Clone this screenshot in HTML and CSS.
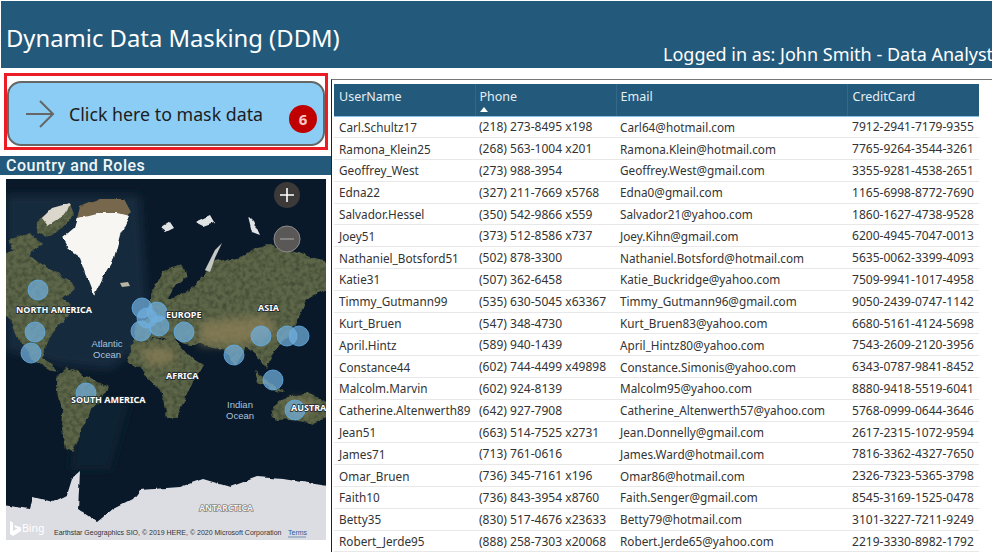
FILE: index.html
```html
<!DOCTYPE html>
<html lang="en">

<head>
    <meta charset="UTF-8">
    <title>Dynamic Data Masking (DDM)</title>
    <link rel="stylesheet" href="styles.css">
</head>

<body>
    <header class="top-bar">
        <h1 class="title">Dynamic Data Masking (DDM)</h1>
        <span class="logged-in">Logged in as: John Smith - Data Analyst</span>
    </header>

    <main class="content">
        <section class="left-col">
            <div class="highlight">
                <button class="mask-btn">
                    <svg class="arrow" viewBox="0 0 30 30" width="30" height="30">
                        <path d="M1 15H28M15 2L28 15L15 28" fill="none" stroke="#666" stroke-width="2"></path>
                    </svg>
                    <span>Click here to mask data</span>
                    <span class="badge">6</span>
                </button>
            </div>
            <h2 class="section-title">Country and Roles</h2>
            <div class="map">
                <svg class="map-svg" viewBox="6 179 320 361" width="320" height="361">
                    <defs>
                        <filter id="land" filterUnits="userSpaceOnUse" x="-10" y="170" width="350" height="380" color-interpolation-filters="sRGB">
                            <feTurbulence type="fractalNoise" baseFrequency="0.08" numOctaves="4" seed="3" result="n"></feTurbulence>
                            <feDisplacementMap in="SourceGraphic" in2="n" scale="8" xChannelSelector="R" yChannelSelector="G" result="d"></feDisplacementMap>
                            <feGaussianBlur in="d" stdDeviation="0.6" result="b"></feGaussianBlur>
                            <feTurbulence type="fractalNoise" baseFrequency="0.22" numOctaves="2" seed="8" result="t"></feTurbulence>
                            <feColorMatrix in="t" type="matrix" values="0 0 0 0 0.22  0 0 0 0 0.26  0 0 0 0 0.18  1.6 0 0 0 -0.6" result="spots"></feColorMatrix>
                            <feComposite in="spots" in2="b" operator="atop" result="c"></feComposite>
                            <feGaussianBlur in="c" stdDeviation="0.4"></feGaussianBlur>
                        </filter>
                        <filter id="ice" filterUnits="userSpaceOnUse" x="-10" y="170" width="350" height="380" color-interpolation-filters="sRGB">
                            <feTurbulence type="fractalNoise" baseFrequency="0.1" numOctaves="3" seed="5" result="n"></feTurbulence>
                            <feDisplacementMap in="SourceGraphic" in2="n" scale="4" xChannelSelector="R" yChannelSelector="G" result="d"></feDisplacementMap>
                            <feGaussianBlur in="d" stdDeviation="0.7"></feGaussianBlur>
                        </filter>
                        <filter id="blur" filterUnits="userSpaceOnUse" x="-10" y="170" width="350" height="380">
                            <feGaussianBlur stdDeviation="5"></feGaussianBlur>
                        </filter>
                    </defs>
                    <rect x="6" y="179" width="320" height="361" fill="#0a1929"></rect>
                    <path d="M6 195L140 195L150 340L110 370L60 365L6 350Z" fill="#12293d" filter="url(#blur)"></path>
                    <path d="M80 400L130 400L110 470L70 470Z" fill="#0f2333" filter="url(#blur)"></path>
                    <!-- land -->
                    <g fill="#5d6648" filter="url(#land)">
                        <path d="M-5 253L20 250L33 258L50 272L70 278L75 288L63 298L72 308L55 330L47 342L42 358L52 364L58 372L50 370L36 362L22 345L14 325L-5 310Z"></path>
                        <path d="M8 240L30 232L42 245L28 254L12 250ZM37 222L50 212L70 204L74 214L62 228L45 238L36 232Z"></path>
                        <path d="M55 379L67 367L83 375L107 387L97 405L83 425L72 454L65 450L62 429L63 412L55 392Z"></path>
                        <path d="M150 295L163 272L183 265L187 275L173 288L170 300L195 285L213 262L233 258L267 245L300 252L335 265L335 288L307 298L300 315L290 335L277 348L265 368L255 352L245 348L235 367L225 350L205 345L190 345L165 337L150 340L132 342L135 322L150 318Z"></path>
                        <path d="M127 362L133 342L173 338L187 355L203 365L193 382L177 418L167 418L160 389L140 370Z"></path>
                        <path d="M272 409L290 395L307 394L335 405L335 415L313 425L293 419L275 420Z"></path>
                        <path d="M255 372L268 382L285 392L270 388L258 382Z"></path>
                    </g>
                    <g fill="#8d8059" filter="url(#blur)" opacity="0.75">
                        <path d="M200 322L268 315L276 335L240 345L200 345Z"></path>
                        <path d="M138 348L172 348L176 362L150 366Z"></path>
                        <path d="M288 400L312 400L314 412L292 414Z"></path>
                    </g>
                    <path d="M42 218L52 208L70 203L66 214L48 226Z" fill="#dcd7cc" filter="url(#ice)"></path>
                    <path d="M80 207L100 199L124 199L131 212L120 222L76 222Z" fill="#77674d" filter="url(#ice)"></path>
                    <path d="M62 238L74 228L77 218L97 213L117 213L129 216L120 235L114 258L104 275L94 296L87 278L80 258L69 250Z" fill="#f8f6f3" filter="url(#ice)"></path>
                    <path d="M161 228L170 222L174 228L166 232ZM195 222L210 215L214 222L203 226ZM248 216L254 222L260 235L252 232Z" fill="#dfe3e4" filter="url(#ice)"></path>
                    <path d="M205 270L215 250L222 243L215 258L210 272Z" fill="#c4c7c2"></path>
                    <path d="M120 283L128 282L130 286L122 287Z" fill="#b8b5a4"></path>
                    <path d="M-5 504L30 509L33 497L53 502L67 495L72 479L80 472L78 509L97 522L113 509L133 499L140 490L180 487L203 479L230 487L257 477L283 479L335 487L335 550L-5 550Z" fill="#dcdde3" filter="url(#ice)"></path>
                    <!-- bubbles -->
                    <g fill="#72aedd" fill-opacity="0.72" stroke="#62b0ec" stroke-width="0.8">
                        <circle cx="38" cy="290" r="10"></circle>
                        <circle cx="35" cy="332" r="10"></circle>
                        <circle cx="31" cy="353" r="10"></circle>
                        <circle cx="142" cy="308" r="10"></circle>
                        <circle cx="157" cy="312" r="10"></circle>
                        <circle cx="147" cy="318" r="10"></circle>
                        <circle cx="141" cy="331" r="10"></circle>
                        <circle cx="159" cy="326" r="10"></circle>
                        <circle cx="184" cy="332" r="10"></circle>
                        <circle cx="261" cy="336" r="10"></circle>
                        <circle cx="287" cy="336" r="10"></circle>
                        <circle cx="299" cy="336" r="10"></circle>
                        <circle cx="234" cy="355" r="10"></circle>
                        <circle cx="273" cy="380" r="10"></circle>
                        <circle cx="86" cy="393" r="10"></circle>
                        <circle cx="295" cy="410" r="10"></circle>
                    </g>
                    <!-- labels -->
                    <g class="map-label">
                        <text x="16" y="313">NORTH AMERICA</text>
                        <text x="166" y="318">EUROPE</text>
                        <text x="258" y="311">ASIA</text>
                        <text x="166" y="379">AFRICA</text>
                        <text x="71" y="403">SOUTH AMERICA</text>
                        <text x="291" y="411">AUSTRA</text>
                    </g>
                    <g class="map-ocean">
                        <text x="107" y="347">Atlantic</text>
                        <text x="107" y="358">Ocean</text>
                        <text x="240" y="408">Indian</text>
                        <text x="240" y="419">Ocean</text>
                    </g>
                    <text class="map-ice" x="226" y="511">ANTARCTICA</text>
                    <!-- zoom buttons -->
                    <circle cx="287" cy="195" r="13" fill="#3b3a39"></circle>
                    <path d="M280 195H294M287 188V202" stroke="#fff" stroke-width="1.6"></path>
                    <circle cx="287" cy="239" r="13" fill="#5a5857" stroke="#8b8a89"></circle>
                    <path d="M280 239H294" stroke="#8f8e8d" stroke-width="1.6"></path>
                    <!-- bing -->
                    <path d="M10 521L13 522.5V531L17.5 528.5L15 527.5L14 525L21 527.5V531L13 536L10 534Z" fill="#fff"></path>
                    <text class="map-bing" x="22" y="532">Bing</text>
                    <text class="map-credit" x="54" y="535">Earthstar Geographics SIO, © 2019 HERE, © 2020 Microsoft Corporation</text>
                    <text class="map-terms" x="288" y="535">Terms</text>
                    <path d="M288 537H306" stroke="#2f5a96" stroke-width="0.6"></path>
                </svg>
            </div>
        </section>

        <section class="right-col">
            <table class="users">
                <thead>
                    <tr>
                        <th class="col-user">UserName</th>
                        <th class="col-phone">Phone<i class="sort"></i></th>
                        <th class="col-email">Email</th>
                        <th>CreditCard</th>
                    </tr>
                </thead>
                <tbody>
                    <tr><td>Carl.Schultz17</td><td>(218) 273-8495 x198</td><td>Carl64@hotmail.com</td><td>7912-2941-7179-9355</td></tr>
                    <tr><td>Ramona_Klein25</td><td>(268) 563-1004 x201</td><td>Ramona.Klein@hotmail.com</td><td>7765-9264-3544-3261</td></tr>
                    <tr><td>Geoffrey_West</td><td>(273) 988-3954</td><td>Geoffrey.West@gmail.com</td><td>3355-9281-4538-2651</td></tr>
                    <tr><td>Edna22</td><td>(327) 211-7669 x5768</td><td>Edna0@gmail.com</td><td>1165-6998-8772-7690</td></tr>
                    <tr><td>Salvador.Hessel</td><td>(350) 542-9866 x559</td><td>Salvador21@yahoo.com</td><td>1860-1627-4738-9528</td></tr>
                    <tr><td>Joey51</td><td>(373) 512-8586 x737</td><td>Joey.Kihn@gmail.com</td><td>6200-4945-7047-0013</td></tr>
                    <tr><td>Nathaniel_Botsford51</td><td>(502) 878-3300</td><td>Nathaniel.Botsford@hotmail.com</td><td>5635-0062-3399-4093</td></tr>
                    <tr><td>Katie31</td><td>(507) 362-6458</td><td>Katie_Buckridge@yahoo.com</td><td>7509-9941-1017-4958</td></tr>
                    <tr><td>Timmy_Gutmann99</td><td>(535) 630-5045 x63367</td><td>Timmy_Gutmann96@gmail.com</td><td>9050-2439-0747-1142</td></tr>
                    <tr><td>Kurt_Bruen</td><td>(547) 348-4730</td><td>Kurt_Bruen83@yahoo.com</td><td>6680-5161-4124-5698</td></tr>
                    <tr><td>April.Hintz</td><td>(589) 940-1439</td><td>April_Hintz80@yahoo.com</td><td>7543-2609-2120-3956</td></tr>
                    <tr><td>Constance44</td><td>(602) 744-4499 x49898</td><td>Constance.Simonis@yahoo.com</td><td>6343-0787-9841-8452</td></tr>
                    <tr><td>Malcolm.Marvin</td><td>(602) 924-8139</td><td>Malcolm95@yahoo.com</td><td>8880-9418-5519-6041</td></tr>
                    <tr><td>Catherine.Altenwerth89</td><td>(642) 927-7908</td><td>Catherine_Altenwerth57@yahoo.com</td><td>5768-0999-0644-3646</td></tr>
                    <tr><td>Jean51</td><td>(663) 514-7525 x2731</td><td>Jean.Donnelly@gmail.com</td><td>2617-2315-1072-9594</td></tr>
                    <tr><td>James71</td><td>(713) 761-0616</td><td>James.Ward@hotmail.com</td><td>7816-3362-4327-7650</td></tr>
                    <tr><td>Omar_Bruen</td><td>(736) 345-7161 x196</td><td>Omar86@hotmail.com</td><td>2326-7323-5365-3798</td></tr>
                    <tr><td>Faith10</td><td>(736) 843-3954 x8760</td><td>Faith.Senger@gmail.com</td><td>8545-3169-1525-0478</td></tr>
                    <tr><td>Betty35</td><td>(830) 517-4676 x23633</td><td>Betty79@hotmail.com</td><td>3101-3227-7211-9249</td></tr>
                    <tr><td>Robert_Jerde95</td><td>(888) 258-7303 x20068</td><td>Robert.Jerde65@yahoo.com</td><td>2219-3330-8982-1792</td></tr>
                </tbody>
            </table>
        </section>
    </main>
</body>

</html>
```

FILE: styles.css
```css
html,
body {
    margin: 0;
    padding: 0;
    height: 552px;
    overflow: hidden;
    background-color: #fff;
    font-family: 'Noto Sans', sans-serif;
}

/* Header */
.top-bar {
    margin: 1px 0 0 1px;
    height: 67px;
    box-sizing: border-box;
    padding: 0 0 2px 5px;
    background-color: #235a7b;
    color: #fff;
    display: flex;
    align-items: flex-end;
    justify-content: space-between;
    white-space: nowrap;
    overflow: hidden;
}

.title {
    margin: 0 0 12px 0;
    font-size: 23.8px;
    line-height: 32px;
    font-weight: 400;
}

.logged-in {
    flex: none;
    width: 329px;
    font-size: 18px;
    line-height: 24px;
}

.content {
    display: flex;
    height: 484px;
}

/* Left side */
.left-col {
    width: 331px;
    flex: none;
    box-sizing: border-box;
    padding: 5px 0 0 4px;
}

.highlight {
    width: 324px;
    height: 77px;
    box-sizing: border-box;
    border: 3px solid #ec1c24;
    padding: 5px 0 0 0;
}

.mask-btn {
    width: 318px;
    height: 65px;
    box-sizing: border-box;
    padding: 0 0 0 16px;
    margin: 0;
    background-color: #8ccdf6;
    border: 2px solid #666;
    border-radius: 14px;
    display: flex;
    align-items: center;
    gap: 14px;
    position: relative;
    font-family: 'Noto Sans', sans-serif;
    font-size: 17.8px;
    color: #1c1c1c;
}

.arrow {
    flex: none;
}

.badge {
    position: absolute;
    left: 280px;
    top: 22px;
    width: 28px;
    height: 28px;
    border-radius: 50%;
    background-color: #c00000;
    color: #f4c9c9;
    font-size: 15px;
    font-weight: bold;
    line-height: 28px;
    text-align: center;
}

.section-title {
    margin: 6px 0 0 -4px;
    width: 331px;
    height: 19px;
    box-sizing: border-box;
    padding-left: 6px;
    background-color: #235a7b;
    color: #f2f6f8;
    font-family: 'Roboto', sans-serif;
    font-size: 16px;
    line-height: 20px;
    font-weight: 500;
    letter-spacing: 0.5px;
}

.map {
    margin: 4px 0 0 2px;
    width: 320px;
    height: 361px;
}

.map-svg {
    display: block;
}

.map-label text {
    fill: #fff;
    stroke: #1a2530;
    stroke-width: 1.5px;
    paint-order: stroke;
    font-family: 'Noto Sans', sans-serif;
    font-size: 9px;
    font-weight: bold;
}

.map-ocean text {
    fill: #a9c4de;
    font-family: 'Liberation Sans', sans-serif;
    font-size: 9.5px;
    text-anchor: middle;
}

.map-ice {
    fill: #f4f4f4;
    stroke: #666;
    stroke-width: 1.2px;
    paint-order: stroke;
    font-family: 'Noto Sans', sans-serif;
    font-size: 8.5px;
    font-weight: bold;
    text-anchor: middle;
}

.map-bing {
    fill: #fff;
    font-family: 'Noto Sans', sans-serif;
    font-size: 10.5px;
}

.map-credit {
    fill: #333;
    font-family: 'Liberation Sans', sans-serif;
    font-size: 7px;
}

.map-terms {
    fill: #2f5a96;
    font-family: 'Liberation Sans', sans-serif;
    font-size: 7px;
}

/* Table */
.right-col {
    flex: 1;
    margin-top: 11px;
    box-sizing: border-box;
    padding: 4px 0 0 2px;
    border-top: 1px solid #777;
    border-left: 1px solid #222;
    overflow: hidden;
}

.users {
    width: 645px;
    border-collapse: collapse;
    table-layout: fixed;
    font-size: 11.75px;
    color: #333;
}

.users th {
    height: 32px;
    box-sizing: border-box;
    padding: 0 0 7px 4px;
    background-color: #235a7b;
    border-bottom: 1px solid #8cc0e0;
    border-left: 1px solid #34688a;
    color: #e6eef3;
    font-size: 12.5px;
    font-weight: 400;
    text-align: left;
    position: relative;
}

.users th:first-child {
    border-left: none;
    padding-left: 5px;
}

.col-user {
    width: 141px;
}

.col-phone {
    width: 141px;
}

.col-email {
    width: 231px;
}

.sort {
    position: absolute;
    left: 4px;
    bottom: 4px;
    border-left: 4px solid transparent;
    border-right: 4px solid transparent;
    border-bottom: 5px solid #fff;
}

.users td {
    height: 21.8px;
    box-sizing: border-box;
    padding: 0 0 0 4px;
    border-bottom: 1px solid #e8e8e8;
    white-space: nowrap;
    overflow: hidden;
}

.users td:first-child {
    padding-left: 5px;
}

/* digits run a bit wider in these two columns */
.users td:nth-child(2),
.users td:nth-child(4) {
    font-size: 12.05px;
}

.users th:last-child,
.users td:last-child {
    padding-left: 5px;
}
```
